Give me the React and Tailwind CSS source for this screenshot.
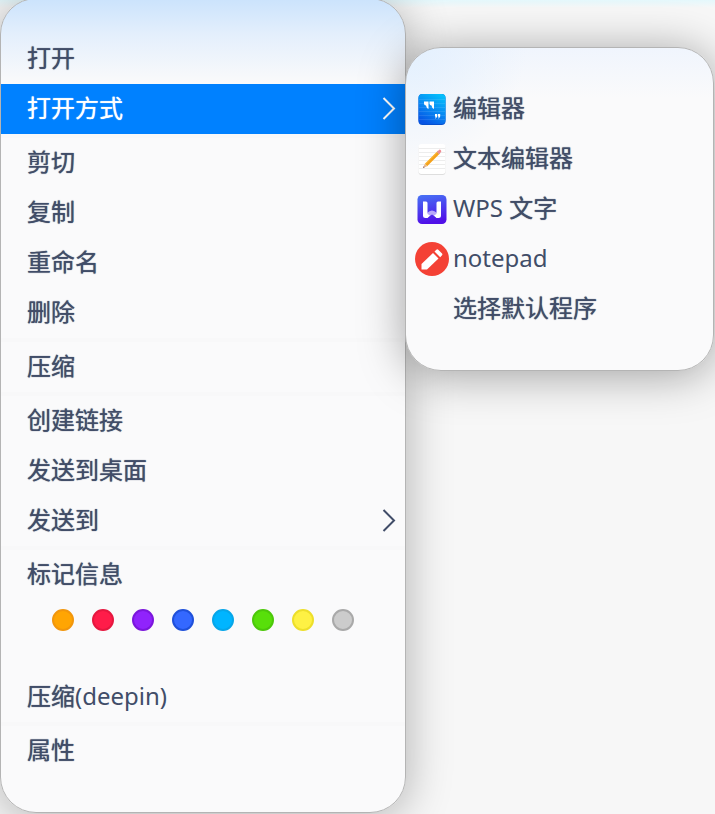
import React from "react";

function Chevron() {
  return (
    <svg className="h-6 w-4" viewBox="0 0 16 24" fill="none" stroke="currentColor" strokeWidth="2" aria-hidden="true">
      <path d="M3.500 1 14 11.500 3.500 22" />
    </svg>
  );
}

function EditorIcon() {
  return (
    <svg className="size-9" viewBox="0 0 36 36" aria-hidden="true">
      <defs>
        <linearGradient id="editor-bg" x1="0.8" y1="0" x2="0.3" y2="1">
          <stop offset="0" stopColor="#04c0fb" />
          <stop offset="0.5" stopColor="#078bf3" />
          <stop offset="1" stopColor="#0654e4" />
        </linearGradient>
      </defs>
      <rect x="4.500" y="3" width="27" height="31" rx="4" fill="#0550cf" />
      <rect x="4.500" y="3" width="27" height="30" rx="4" fill="url(#editor-bg)" />
      <path d="M5 8.500H31M5 12.500H31M5 16.500H31M5 20.500H31M5 24.500H31M5 28.500H31" stroke="#fff" strokeOpacity="0.1" />
      <path d="M10 10.500h4.500V18q-2-.5-2.500-3.500-2 0-2-2zM15.500 10.500H20V18q-2-.5-2.500-3.500-2 0-2-2z" fill="#fff" />
      <path d="M21 23h2.200v2.500L21.500 28v-2.500H21zM24 23h2.200v2.500L24.500 28v-2.500H24z" fill="#fff" />
    </svg>
  );
}

function TextEditorIcon() {
  return (
    <svg className="size-9" viewBox="0 0 36 36" aria-hidden="true">
      <rect x="4.500" y="4" width="27" height="30" rx="3" fill="#dedede" />
      <rect x="4.500" y="3" width="27" height="30" rx="3" fill="#fff" />
      <path d="M5 7.500H31M5 11.500H31M5 15.500H31M5 19.500H31M5 23.500H31M5 27.500H31" stroke="#ededed" />
      <path d="M12 24 25 11" stroke="#f5a21b" strokeWidth="3.200" />
      <path d="M11.200 23.200 24 10.400" stroke="#ffc64d" strokeWidth="1" />
      <path d="M9 27l1.800-4.200 2.400 2.400z" fill="#e9b98c" />
      <path d="M9 27l.7-1.700 1 1z" fill="#744a62" />
      <path d="M24 12l1.200-1.200" stroke="#b7b5c2" strokeWidth="3.200" />
      <path d="M25 11l.8-.8" stroke="#ef8d94" strokeWidth="3" strokeLinecap="round" />
    </svg>
  );
}

function WpsIcon() {
  return (
    <svg className="size-9" viewBox="0 0 36 36" aria-hidden="true">
      <defs>
        <linearGradient id="wps-bg" x1="0" y1="0" x2="0.2" y2="1">
          <stop offset="0" stopColor="#4774f5" />
          <stop offset="1" stopColor="#5010e8" />
        </linearGradient>
      </defs>
      <rect x="3.500" y="4" width="29" height="29" rx="4.500" fill="url(#wps-bg)" />
      <path d="M13 22q5-5 10 0v5l-5-3.500-5 3.500z" fill="#b9a8fa" />
      <path d="M9 10.500h3q1.500 0 1.500 1.500v11l2.500 1.500-2.500 2.500h-2Q9 27 9 24.500z" fill="#fff" />
      <path d="M27 10.500h-3q-1.500 0-1.500 1.500v11l-2.500 1.500 2.500 2.500h2q2.500 0 2.500-2.500z" fill="#fff" />
    </svg>
  );
}

function NotepadIcon() {
  return (
    <svg className="size-9" viewBox="0 0 36 36" aria-hidden="true">
      <circle cx="18" cy="18" r="17" fill="#f44135" />
      <path d="M7.500 28.500v-5.500L19 12l5.500 5.500L13 28.500z" fill="#fff" />
      <path d="M20.500 10.500l1.600-1.600q1.200-1.200 2.400 0l3.300 3.300q1.200 1.200 0 2.400L26.200 16.200z" fill="#fff" />
    </svg>
  );
}

const groups = [
  [{ label: "打开" }, { label: "打开方式", active: true, more: true }],
  [{ label: "剪切" }, { label: "复制" }, { label: "重命名" }, { label: "删除" }],
  [{ label: "压缩" }],
  [{ label: "创建链接" }, { label: "发送到桌面" }, { label: "发送到", more: true }],
  [{ label: "标记信息", tags: true }, { label: "压缩(deepin)" }],
  [{ label: "属性" }],
];

const tags = [
  ["橙色", "bg-[#ffa503] border-[#f2960c]"],
  ["红色", "bg-[#ff1c49] border-[#e6173f]"],
  ["紫色", "bg-[#9023fc] border-[#7b16dc]"],
  ["蓝色", "bg-[#3468ff] border-[#1f50da]"],
  ["青色", "bg-[#00b5ff] border-[#06a6e9]"],
  ["绿色", "bg-[#58df0a] border-[#4cc80a]"],
  ["黄色", "bg-[#fef144] border-[#eddf2a]"],
  ["灰色", "bg-[#cccccc] border-[#a9a9a9]"],
];

const apps = [
  { label: "编辑器", Icon: EditorIcon },
  { label: "文本编辑器", Icon: TextEditorIcon },
  { label: "WPS 文字", Icon: WpsIcon },
  { label: "notepad", Icon: NotepadIcon },
  { label: "选择默认程序" },
];

// Chinese runs are set a little heavier than Latin ones.
function Label({ text }) {
  return (
    <span className="pb-0.5">
      {text.split(/([\u4e00-\u9fff]+)/).map((run, index) =>
        index % 2 === 1 ? (
          <span key={index} className="[text-shadow:0_0_1px_currentColor]">
            {run}
          </span>
        ) : (
          run
        ),
      )}
    </span>
  );
}

function MenuRow({ label, active, more }) {
  return (
    <button
      type="button"
      role="menuitem"
      aria-haspopup={more ? "menu" : undefined}
      className={
        active
          ? "flex h-[50px] w-full items-center justify-between bg-[#0081ff] pr-[9px] pl-[26px] text-left text-white"
          : "flex h-[50px] w-full items-center justify-between pr-[9px] pl-[26px] text-left"
      }
    >
      <Label text={label} />
      {more && <Chevron />}
    </button>
  );
}

function TagPicker() {
  return (
    <div className="flex h-[72px] gap-[18px] pt-[9px] pl-[51px]">
      {tags.map(([name, color]) => (
        <button key={name} type="button" aria-label={name} className={`size-[22px] rounded-full border-2 ${color}`} />
      ))}
    </div>
  );
}

export default function App() {
  return (
    <main className="flex min-h-screen items-start overflow-hidden bg-[linear-gradient(#e4f8fc,#f7f7f7_8px)] font-['Noto_Sans','Noto_Sans_CJK_SC',sans-serif] text-2xl text-[#414d68]">
      <div
        role="menu"
        className="-mt-0.5 w-[406px] shrink-0 rounded-[36px] border border-[#b4b4b4] bg-[linear-gradient(#cbe3fc,#e4effc_36px,#fafafb_84px)] pt-[35px] pb-9 shadow-[0_4px_46px_rgba(0,0,0,0.3)]"
      >
        {groups.map((group, index) => (
          <div key={group[0].label} role="group" className={index > 0 ? "border-t-4 border-[#f8f8f9]" : ""}>
            {group.map((item) => (
              <React.Fragment key={item.label}>
                <MenuRow {...item} />
                {item.tags && <TagPicker />}
              </React.Fragment>
            ))}
          </div>
        ))}
      </div>
      <div
        role="menu"
        aria-label="打开方式"
        className="mt-[47px] mr-px -ml-px min-w-0 flex-1 rounded-[36px] border border-[#b4b4b4] bg-[radial-gradient(circle_at_0_0,#e3f0fe,transparent_120px),linear-gradient(#f0f5fd,#fafafb_50px)] py-9 shadow-[0_4px_46px_rgba(0,0,0,0.36)]"
      >
        {apps.map(({ label, Icon }) => (
          <button key={label} type="button" role="menuitem" className="flex h-[50px] w-full items-center gap-[3px] pl-2 text-left">
            <span className="size-9 shrink-0">{Icon && <Icon />}</span>
            <Label text={label} />
          </button>
        ))}
      </div>
    </main>
  );
}
